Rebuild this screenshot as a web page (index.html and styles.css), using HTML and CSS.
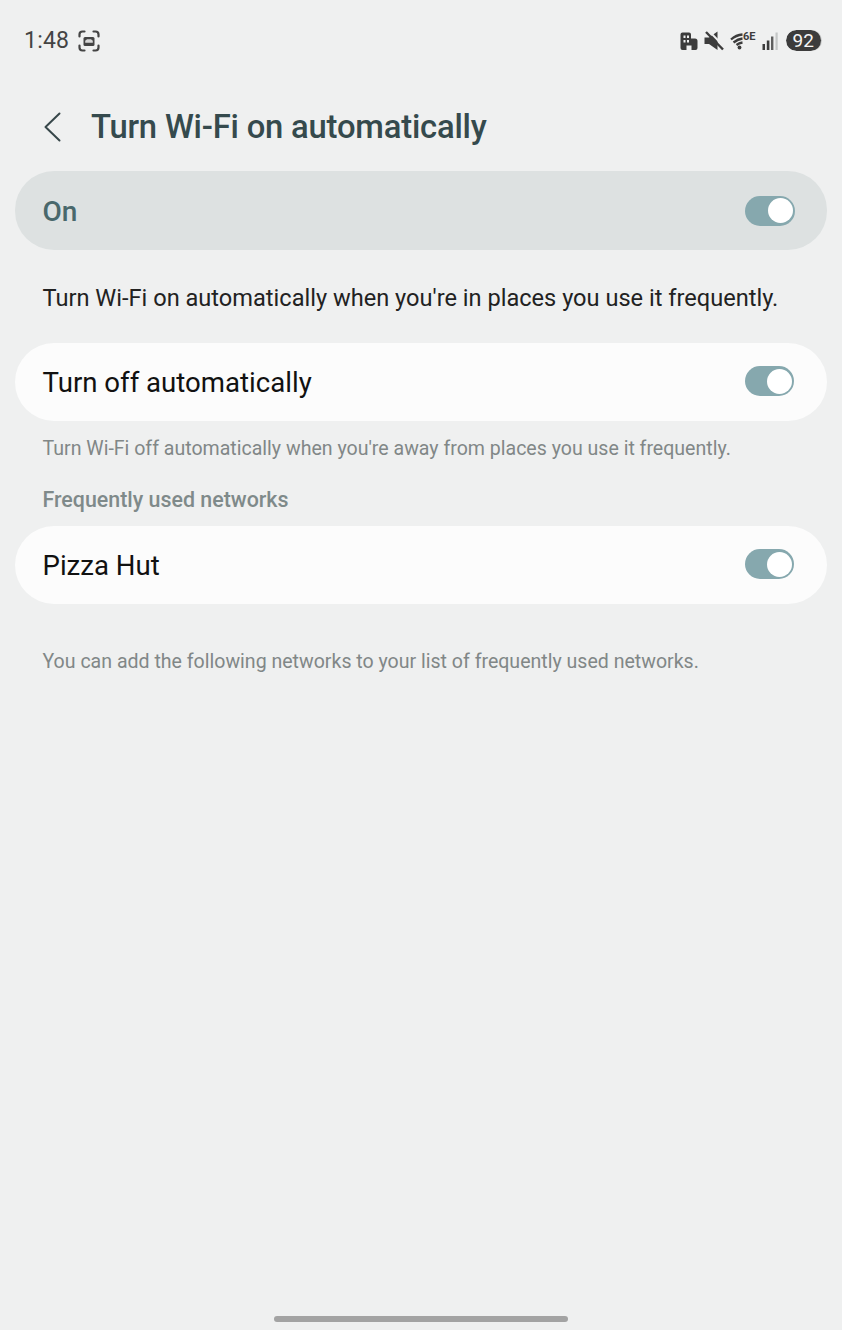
FILE: index.html
```html
<!DOCTYPE html>
<html lang="en">
<head>
<meta charset="utf-8">
<title>Turn Wi-Fi on automatically</title>
<link rel="stylesheet" href="styles.css">
</head>
<body>
<div class="page">
  <header class="status">
    <div class="status-left">
      <span class="time">1:48</span>
      <svg width="22" height="22" viewBox="0 0 22 22" fill="none" stroke="#444" stroke-width="2.200" stroke-linecap="round"><path d="M1.500 6.500V4.500Q1.500 1.500 4.500 1.500H6.500M15.500 1.500h2Q20.500 1.500 20.500 4.500V6.500M20.500 15.500v2Q20.500 20.500 17.500 20.500H15.500M6.500 20.500H4.500Q1.500 20.500 1.500 17.500V15.500"/><rect x="5.500" y="7" width="11" height="9" rx="1.500" fill="#444" stroke="none"/><path d="M7.200 12.800V10.800L9 9.200H13L14.800 10.800V12.800Z" fill="#d8d8d8" stroke="none"/></svg>
    </div>
    <div class="status-right">
      <svg width="18" height="18" viewBox="0 0 18 18"><path fill="#3c3c3c" fill-rule="evenodd" d="M0.500 2.500Q0.500 0.500 2.500 0.500H9Q11 0.500 11 2.500V6.500H15Q17.500 6.500 17.500 9V16Q17.500 18 15.500 18H11.500V13.500H6.500V18H2.500Q0.500 18 0.500 16ZM3.500 3.500V6H5.500V3.500ZM7 3.500V6H9V3.500ZM3.500 8V10.500H5.500V8ZM7 8V10.500H9V8Z"/></svg>
      <svg width="20" height="20" viewBox="0 0 20 20"><path fill="#3c3c3c" d="M0.500 6.500H5L13.500 0.500V19L5 13H0.500Z"/><path stroke="#efefef" stroke-width="2" d="M4 -1L21 16.500"/><path stroke="#3c3c3c" stroke-width="2.400" d="M2 1L19 18.500"/></svg>
      <span class="wifi">
        <svg width="15" height="18" viewBox="0 0 15 18" fill="none" stroke="#3c3c3c" stroke-width="2.300"><path d="M1 7.500Q6 3 12.500 2.500M3.500 10.500Q8 7 12.500 6.500M6.500 13Q9 11 12.500 10.500"/><circle cx="9.500" cy="15.500" r="1.900" fill="#3c3c3c" stroke="none"/></svg>
        <span class="wifi-tag">6E</span>
      </span>
      <svg width="18" height="18" viewBox="0 0 18 18"><rect x="0.500" y="12" width="2.500" height="6" fill="#3c3c3c"/><rect x="4.800" y="8.500" width="2.600" height="9.500" fill="#3c3c3c"/><rect x="9" y="4.500" width="2.400" height="13.500" fill="#5e5e5e"/><rect x="13.500" y="0.500" width="2.200" height="17.500" fill="#c4c6c6"/></svg>
      <span class="battery"><span class="battery-level">92</span></span>
    </div>
  </header>

  <div class="titlebar">
    <svg width="17" height="30" viewBox="0 0 17 30" fill="none" stroke="#37474a" stroke-width="2" stroke-linecap="round" stroke-linejoin="round"><path d="M15.500 1.500L1.500 15L15.500 28.500"/></svg>
    <h1 class="title">Turn Wi-Fi on automatically</h1>
  </div>

  <div class="card card-on">
    <span class="on-label">On</span>
    <span class="toggle toggle-on"><span class="knob"></span></span>
  </div>
  <p class="lead">Turn Wi-Fi on automatically when you're in places you use it frequently.</p>

  <div class="card">
    <span class="label">Turn off automatically</span>
    <span class="toggle"><span class="knob"></span></span>
  </div>
  <p class="note">Turn Wi-Fi off automatically when you're away from places you use it frequently.</p>
  <h2 class="section">Frequently used networks</h2>

  <div class="card">
    <span class="label">Pizza Hut</span>
    <span class="toggle"><span class="knob"></span></span>
  </div>
  <p class="note note-last">You can add the following networks to your list of frequently used networks.</p>

  <div class="spacer"></div>
  <div class="handle"></div>
</div>
</body>
</html>
```
FILE: styles.css
```css
* { box-sizing: border-box; }
html, body { margin: 0; padding: 0; }
body {
  background: #eff0f0;
  font-family: Roboto, "Noto Sans", sans-serif;
  color: #111;
}
.page {
  width: 842px;
  height: 1330px;
  display: flex;
  flex-direction: column;
  padding: 0 15px;
  overflow: hidden;
}
.status {
  height: 82px;
  display: flex;
  justify-content: space-between;
  align-items: center;
  padding: 0 5px 0 9px;
}
.status-left { display: flex; align-items: center; gap: 9px; }
.time { font-size: 23px; color: #444; letter-spacing: 0.2px; margin-bottom: 2px; }
.status-right { display: flex; align-items: center; gap: 6px; }
.wifi { display: flex; width: 26px; height: 18px; }
.wifi-tag {
  font-size: 11px; font-weight: 700; color: #3c3c3c;
  line-height: 9px; margin-left: -2px;
}
.battery {
  width: 36px; height: 21px; border-radius: 10.500px;
  background: #c9cbcb;
  margin-bottom: 1px;
  overflow: hidden;
}
.battery-level {
  display: block;
  width: 34.500px; height: 21px; border-radius: 10.500px;
  background: #3c3c3c; color: #f6f6f6;
  font-size: 19px; text-align: center; line-height: 21px;
}
.titlebar {
  height: 89px;
  display: flex;
  align-items: center;
  padding: 0 0 0 29px;
  gap: 30px;
}
.title {
  margin: 0;
  font-size: 32.800px;
  font-weight: 500;
  color: #354a4d;
  letter-spacing: -0.2px;
}
.card {
  height: 78px;
  flex: none;
  background: #fcfcfc;
  border-radius: 39px;
  display: flex;
  align-items: center;
  justify-content: space-between;
  padding: 0 33px 0 27.500px;
}
.card-on { background: #dde1e1; height: 79px; padding-right: 32px; }
.on-label { font-size: 28px; font-weight: 500; color: #49686c; padding-top: 2px; }
.label { font-size: 27.600px; color: #111; padding-top: 1px; }
.toggle {
  width: 49px; height: 30px; border-radius: 15px;
  background: #86a8ae;
  display: flex; align-items: center; justify-content: flex-end;
  padding-right: 2px;
  margin-bottom: 2px;
}
.toggle-on { width: 50px; margin-bottom: 0; }
.knob { width: 25px; height: 25px; border-radius: 50%; background: #fff; }
.lead {
  margin: 0; height: 93px; padding: 0 0 0 27.500px;
  font-size: 23.600px; line-height: 97px; color: #222;
  white-space: nowrap;
}
.note {
  margin: 0; height: 52px; padding: 0 0 0 27.500px;
  font-size: 19.560px; line-height: 56px; color: #818787;
  white-space: nowrap;
}
.section {
  margin: 0; height: 53px; padding: 0 0 0 27.500px;
  font-size: 21.400px; font-weight: 500; line-height: 54px; color: #7f8a8a;
}
.note-last { height: 112px; line-height: 116px; }
.spacer { flex: 1; }
.handle {
  width: 294px; height: 6px; border-radius: 3px;
  background: #a3a3a3;
  align-self: center;
  margin-bottom: 8px;
}
```
